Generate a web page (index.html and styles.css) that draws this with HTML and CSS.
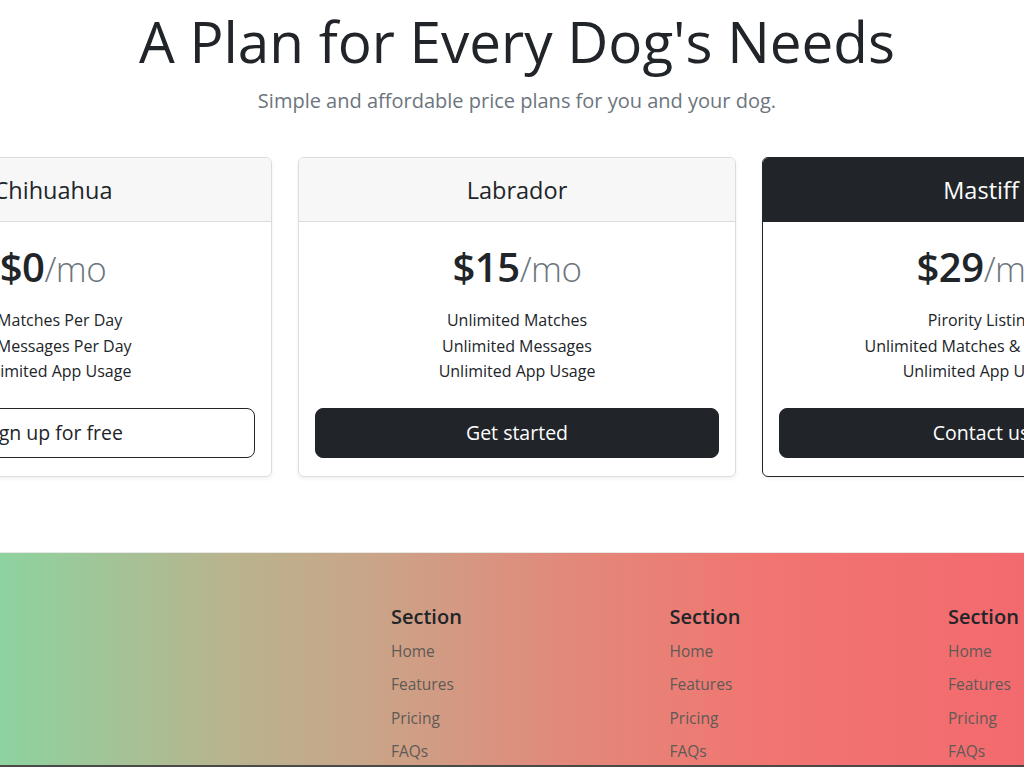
FILE: index.html
```html
<!DOCTYPE html>
<html lang="en">
<head>
<meta charset="utf-8">
<title>Pricing</title>
<link rel="stylesheet" href="styles.css">
</head>
<body>
<div class="page">
  <header class="intro">
    <h1 class="title">A Plan for Every Dog's Needs</h1>
    <p class="lead">Simple and affordable price plans for you and your dog.</p>
  </header>
  <div class="plans">
    <div class="card">
      <div class="card-header"><h4>Chihuahua</h4></div>
      <div class="card-body">
        <h2 class="price">$0<small>/mo</small></h2>
        <ul class="features">
          <li>5 Matches Per Day</li>
          <li>10 Messages Per Day</li>
          <li>Unlimited App Usage</li>
        </ul>
        <button class="btn btn-outline">Sign up for free</button>
      </div>
    </div>
    <div class="card">
      <div class="card-header"><h4>Labrador</h4></div>
      <div class="card-body">
        <h2 class="price">$15<small>/mo</small></h2>
        <ul class="features">
          <li>Unlimited Matches</li>
          <li>Unlimited Messages</li>
          <li>Unlimited App Usage</li>
        </ul>
        <button class="btn btn-dark">Get started</button>
      </div>
    </div>
    <div class="card card-dark">
      <div class="card-header"><h4>Mastiff</h4></div>
      <div class="card-body">
        <h2 class="price">$29<small>/mo</small></h2>
        <ul class="features">
          <li>Pirority Listing</li>
          <li>Unlimited Matches &amp; Messages</li>
          <li>Unlimited App Usage</li>
        </ul>
        <button class="btn btn-dark">Contact us</button>
      </div>
    </div>
  </div>
</div>
<footer class="footer">
  <div class="footer-cols">
    <div class="fcol">
      <h5>Section</h5>
      <ul>
        <li><a href="#">Home</a></li>
        <li><a href="#">Features</a></li>
        <li><a href="#">Pricing</a></li>
        <li><a href="#">FAQs</a></li>
      </ul>
    </div>
    <div class="fcol">
      <h5>Section</h5>
      <ul>
        <li><a href="#">Home</a></li>
        <li><a href="#">Features</a></li>
        <li><a href="#">Pricing</a></li>
        <li><a href="#">FAQs</a></li>
      </ul>
    </div>
    <div class="fcol">
      <h5>Section</h5>
      <ul>
        <li><a href="#">Home</a></li>
        <li><a href="#">Features</a></li>
        <li><a href="#">Pricing</a></li>
        <li><a href="#">FAQs</a></li>
      </ul>
    </div>
  </div>
</footer>
</body>
</html>
```

FILE: styles.css
```css
html, body {
  margin: 0;
  padding: 0;
  overflow: hidden;
  background: #fff;
}
body {
  font-family: "Open Sans", "Noto Sans", sans-serif;
  color: #212529;
  font-size: 16px;
  line-height: 1.5;
}
.page {
  width: 1366px;
  margin-left: -166px;
}
.intro {
  text-align: center;
}
.title {
  margin: 8px 0 0;
  font-size: 56.6px;
  font-weight: 400;
  line-height: 67px;
  color: #212529;
}
.lead {
  margin: 12px 0 0;
  font-size: 20px;
  font-weight: 400;
  color: #6c757d;
  line-height: 28px;
}
.plans {
  display: flex;
  gap: 26px;
  margin-top: 42px;
}
.card {
  flex: 0 0 438px;
  box-sizing: border-box;
  border: 1px solid #dcdcdc;
  border-radius: 6px;
  box-shadow: 0 2px 4px rgba(0,0,0,.06);
  overflow: hidden;
  text-align: center;
  background: #fff;
}
.card-header {
  background: #f7f7f7;
  border-bottom: 1px solid #dcdcdc;
  height: 64px;
  box-sizing: border-box;
  padding-top: 3px;
  display: flex;
  align-items: center;
  justify-content: center;
}
.card-header h4 {
  margin: 0;
  font-size: 23.5px;
  font-weight: 400;
}
.card-dark {
  border-color: #212529;
}
.card-dark .card-header {
  background: #212529;
  color: #fff;
  border-bottom-color: #212529;
}
.card-body {
  padding: 16px 16px 18px;
}
.price {
  margin: 1px 0 0;
  font-size: 40px;
  font-weight: 600;
  line-height: 56px;
  letter-spacing: -0.5px;
}
.price small {
  font-size: 35px;
  font-weight: 300;
  color: #6c757d;
}
.features {
  list-style: none;
  margin: 11px 0 23px;
  padding: 0;
  font-size: 16px;
  line-height: 25.5px;
}
.btn {
  display: block;
  width: 100%;
  height: 50px;
  border-radius: 8px;
  font-family: inherit;
  font-size: 19.5px;
  cursor: pointer;
}
.btn-dark {
  background: #212529;
  border: 1px solid #212529;
  color: #fff;
}
.btn-outline {
  background: #fff;
  border: 1px solid #212529;
  color: #212529;
}
.footer {
  margin-top: 75px;
  height: 215px;
  border-bottom: 2px solid #4a4a4a;
  background: linear-gradient(to right, #8dd3a0 0%, #b8b48e 22%, #c9a588 36%, #e2897a 55%, #f17571 75%, #f36a6e 100%);
  border-top: 1px solid #e8e8e8;
  box-sizing: border-box;
}
.footer-cols {
  display: flex;
  padding: 49px 0 0 391px;
}
.fcol {
  flex: 0 0 278.5px;
}
.fcol h5 {
  margin: 0 0 7px;
  font-size: 20px;
  font-weight: 600;
  line-height: 30px;
  color: #212529;
}
.fcol ul {
  list-style: none;
  margin: 0;
  padding: 0;
}
.fcol li {
  height: 33.5px;
  line-height: 24px;
}
.fcol a {
  color: #5f5a56;
  text-decoration: none;
  font-size: 15.5px;
}
```
